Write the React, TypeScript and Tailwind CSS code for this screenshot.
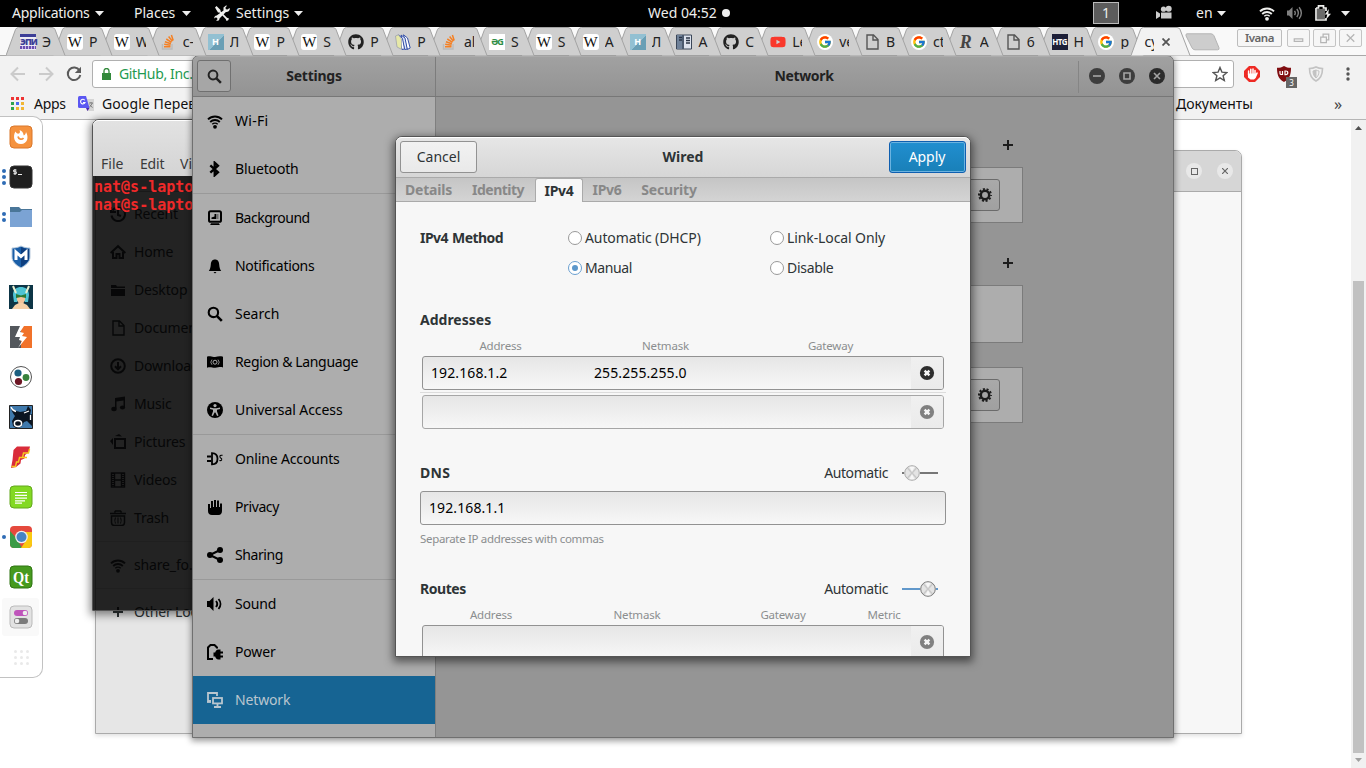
import React from "react";
import { FaGithub, FaYoutube } from "react-icons/fa";
import { FcGoogle } from "react-icons/fc";

type IconProps = { name: string; className?: string };

const glyphs: Record<string, React.ReactNode> = {
  wifi: (
    <g fill="none" stroke="currentColor" strokeWidth="2">
      <path d="M1 6.4a10 10 0 0 1 14 0" />
      <path d="M3.2 9a6.8 6.8 0 0 1 9.6 0" strokeWidth="1.8" />
      <path d="M5.3 11.3a3.8 3.8 0 0 1 5.4 0" strokeWidth="1.4" />
      <circle cx="8" cy="13.8" r="1.9" fill="currentColor" stroke="none" />
    </g>
  ),
  bluetooth: <path d="M3.300 4.300L11 11.300 7.700 14.300V1.700L11 4.700 3.300 11.700" fill="none" stroke="currentColor" strokeWidth="2.300" />,
  background: (
    <g>
      <rect x="2" y="1.2" width="12" height="10.6" rx="1.6" fill="none" stroke="currentColor" strokeWidth="2" />
      <path d="M4.5 8.5v-1l3-1V4h1.500v5h-4.500z" />
      <path d="M9 4h2.500v5h-2.500z" opacity=".35" />
      <path d="M4 13.200h8l.8 1.800h-9.600z" />
    </g>
  ),
  bell: <path d="M8 1.500c-3 0-4 2.300-4.200 5-.2 3-.8 4.800-2 6.500h12.400c-1.200-1.700-1.800-3.500-2-6.500-.2-2.700-1.200-5-4.200-5zM6.500 14h3l-1.500 1.400z" />,
  search: (
    <g fill="none" stroke="currentColor" strokeWidth="2.100">
      <circle cx="6.400" cy="6.400" r="4.700" />
      <path d="M9.800 9.800l5 5" strokeWidth="2.600" />
    </g>
  ),
  flag: (
    <g>
      <path d="M0 2.700c3-1.200 5 .8 8 .2s5-1 8-.2v10.800c-3-1-5 .3-8 .2s-5-1.200-8 0z" />
      <path d="M5 5.600a3.800 3.800 0 0 0 0 5.200M11 5.600a3.800 3.800 0 0 1 0 5.200" fill="none" stroke="#adadad" strokeWidth="0.800" />
      <circle cx="8" cy="8.200" r="2" fill="none" stroke="#adadad" strokeWidth="1" />
    </g>
  ),
  access: (
    <g>
      <circle cx="8" cy="8" r="8" />
      <circle cx="8" cy="3.600" r="1.600" fill="#adadad" />
      <path d="M3 5.600l3.500.6h3l3.500-.6v1.400l-3 .8v1.600l1.500 4-1.400.5-1.700-3.400h-.8l-1.700 3.400-1.400-.5 1.500-4v-1.600l-3-.8z" fill="#adadad" />
    </g>
  ),
  online: (
    <g fill="none" stroke="currentColor" strokeWidth="1.800">
      <path d="M0 5.500h4M0 10h4" />
      <path d="M5 2.200c4 0 5.500 2.500 5.500 5.600s-1.500 5.600-5.500 5.600z" />
      <path d="M15.500 4.400c-2-.6-3 .3-2.500 1.700s2.400 1 1.600 2.800c-.4.800-1.400.8-2.200.6" strokeWidth="1.100" />
    </g>
  ),
  hand: <path d="M1 5h2v4h1V2h2v6h1V1h2v7h1V1.500h2V8h1V4.500h2V12c0 2-1 4-3.500 4H5c-2.500 0-4-1.500-4-4z" />,
  share: (
    <g>
      <path d="M3 8l10-5M3 8l10 5" stroke="currentColor" strokeWidth="2" />
      <circle cx="3" cy="8" r="3" />
      <circle cx="13" cy="3" r="3" />
      <circle cx="13" cy="13" r="3" />
    </g>
  ),
  sound: (
    <g>
      <path d="M0 5h2.500l4-4v14l-4-4H0z" />
      <path d="M9 5c1.500 1.800 1.500 4.200 0 6M11.500 3c2.600 3 2.600 7 0 10" fill="none" stroke="currentColor" strokeWidth="1.900" />
    </g>
  ),
  loud: (
    <g>
      <path d="M0 5.500h2l3.500-3.500v12l-3.500-3.500H0z" />
      <path d="M7.500 5.800c1 1.400 1 3 0 4.400M9.800 4c2 2.600 2 5.400 0 8M12.100 2.300c3 3.800 3 7.600 0 11.400" fill="none" stroke="currentColor" strokeWidth="1.400" />
    </g>
  ),
  power: (
    <g>
      <path d="M6 15H1V3.500L3.500 1h4L10 3.500v1" fill="none" stroke="currentColor" strokeWidth="2" />
      <path d="M11.500 5.500h2v2H16v2h-2.500v2H16v2h-2.500v2h-2c-2 0-3-1.500-3.300-3H6.500v-4h1.700c.3-1.500 1.300-3 3.300-3z" />
    </g>
  ),
  network: (
    <g fill="none" stroke="currentColor" strokeWidth="1.800">
      <path d="M4 9H1V1h9v3" />
      <path d="M0 10h4" />
      <rect x="6" y="6" width="9" height="5.400" />
      <path d="M10.500 11v4M7 15h7" />
    </g>
  ),
  recent: (
    <g fill="none" stroke="currentColor" strokeWidth="2">
      <path d="M2.500 4.500a6.800 6.800 0 1 1-1 5" />
      <path d="M1 1v5h5" />
      <path d="M8 4v5l3 1" />
    </g>
  ),
  home: (
    <g fill="none" stroke="currentColor" strokeWidth="2">
      <path d="M.6 9L8 2.200 15.400 9" />
      <path d="M3 8v6h3.500v-4h3v4H13V8" />
    </g>
  ),
  folder: <path d="M1 3h5l1 1.500h8v1.500H1zM1 7h14v7H1z" />,
  doc: <path d="M3 1h6.500L14 5.500V15H3zM9 1v5h5" fill="none" stroke="currentColor" strokeWidth="1.400" />,
  download: (
    <g fill="none" stroke="currentColor" strokeWidth="2">
      <circle cx="8" cy="8" r="6.800" />
      <path d="M8 4v7M5 8.300l3 3 3-3" />
    </g>
  ),
  music: (
    <g>
      <path d="M5 2l10-1.500V11h-1.500V4.500L6.500 5.500v7H5z" />
      <ellipse cx="4" cy="13" rx="2.700" ry="2.200" />
      <ellipse cx="12.500" cy="11.500" rx="2.600" ry="2" />
    </g>
  ),
  pictures: (
    <g>
      <rect x="5" y="5" width="10" height="9" fill="none" stroke="currentColor" strokeWidth="2" />
      <path d="M0 7l3-3v7zM5 2l4-2 3 2.500z" />
    </g>
  ),
  video: (
    <g fill="none" stroke="currentColor">
      <rect x="1.500" y="1" width="13" height="14" strokeWidth="1.400" />
      <path d="M4.500 1v14M11.500 1v14M4.500 8h7" strokeWidth="1.400" />
      <path d="M3 1v14M13 1v14" strokeWidth="2" strokeDasharray="1 1" />
    </g>
  ),
  trash: (
    <g fill="none" stroke="currentColor" strokeWidth="1.500">
      <path d="M4.500 2.500l1-1.500h5l1 1.500M0 3.500h16" />
      <path d="M1.500 6h13v6.500c0 2-1 3-3 3h-7c-2 0-3-1-3-3z" />
      <path d="M5.500 7.500c-1 2-1 4 0 6M8 7.500v6M10.500 7.500c1 2 1 4 0 6" strokeWidth="1.100" />
    </g>
  ),
  plus: <path d="M7 3h2v4h4v2H9v4H7V9H3V7h4z" />,
  gear: (
    <g fill="none" stroke="currentColor">
      <circle cx="8" cy="8" r="4.200" strokeWidth="2.500" />
      <circle cx="8" cy="8" r="6" strokeWidth="2" strokeDasharray="2 1.770" strokeDashoffset="1" />
    </g>
  ),
  clear: (
    <g>
      <circle cx="8" cy="8" r="7.100" />
      <path d="M5.600 5.600l4.800 4.800M10.400 5.600l-4.800 4.800" stroke="#f5f5f5" strokeWidth="2.400" />
    </g>
  ),
  tools: (
    <g>
      <path d="M1 2.500L2.500 1l4 4v1.300l6.500 6.500 2 .7-.8 1.700-1.700.8-.8-2L5.500 7.500H4z" />
      <path d="M9.500 5.500V2.500L12 .5l1 .3-1.600 2 .5 1.400 1.600.4 2-1.600.4 1c-.5 2-2 3.300-4 3L5.500 13.500c0 1.600-1.200 2.500-2.600 2.300l-.8-.3 1.400-1.300-.5-1.400-1.400-.4L.3 13.500C0 12 1 10.500 2.700 10.500z" />
    </g>
  ),
  camera: (
    <g>
      <circle cx="7.500" cy="4.200" r="2.600" />
      <circle cx="12.700" cy="3.700" r="3" />
      <path d="M5 7.500h10.500v6H5zM0 6l4 2.500v3L0 14z" />
    </g>
  ),
  battery: (
    <g>
      <path d="M1 3h2.500V.8h5V3H11v3M11 13v2H1V3" fill="none" stroke="currentColor" strokeWidth="1.700" />
      <path d="M2 4h8v10H2z" opacity=".45" />
      <path d="M13.800 4l-4 5.500h2.500l-1.300 5L16 8.800h-2.700z" />
    </g>
  ),
};

const Icon = ({ name, className = "size-4" }: IconProps) => (
  <svg viewBox="0 0 16 16" className={`shrink-0 ${className}`} fill="currentColor">
    {glyphs[name]}
  </svg>
);

const Caret = () => (
  <svg viewBox="0 0 9 5" className="h-[5px] w-[9px]" fill="#eee">
    <path d="M0 0h9L4.500 5z" />
  </svg>
);

/* ---------- top panel ---------- */

const TopPanel = () => (
  <header className="relative z-50 flex h-[27px] items-center bg-black pb-px text-[14px] text-[#eeeeec]">
    <div className="flex w-[122px] items-center gap-[6px] pl-3 whitespace-nowrap">
      <span className="w-[77px] tracking-[-0.24px]">Applications</span>
      <Caret />
    </div>
    <div className="flex w-[92px] items-center gap-[6px] pl-3 whitespace-nowrap">
      <span className="w-[42px]">Places</span>
      <Caret />
    </div>
    <div className="flex flex-1 items-center whitespace-nowrap">
      <Icon name="tools" />
      <span className="ml-[6px] w-[58px]">Settings</span>
      <Caret />
    </div>
    <div className="flex w-[445px] items-center whitespace-nowrap">
      <span className="w-[74px]">Wed 04:52</span>
      <span className="size-2 rounded-full bg-[#eee]" />
    </div>
    <div className="flex w-[273px] items-center">
      <div className="flex h-[22px] w-[26px] items-center justify-center border border-[#bbb] bg-[#5c5c5c]">1</div>
      <Icon name="camera" className="ml-[37px] size-4 text-[#ccc]" />
      <span className="ml-[24px] w-[21px]">en</span>
      <Caret />
      <Icon name="wifi" className="ml-[33px] size-4" />
      <Icon name="loud" className="ml-3 size-4 text-[#808080]" />
      <Icon name="battery" className="ml-3 size-4" />
      <span className="w-[10px]" />
      <Caret />
    </div>
  </header>
);

/* ---------- browser ---------- */

const StackIcon = () => (
  <svg viewBox="0 0 16 16" className="size-4" fill="none">
    <path d="M1.500 10v5h9.500v-5" stroke="#bbb" strokeWidth="1.400" />
    <path d="M3 12.800h6.500M3.200 10.300l6.300.9M3.900 7.700l6 2M5.300 5l5.200 3.300M7.600 2.600l3.800 4.600M10.400 1l1.800 5.400" stroke="#f48024" strokeWidth="1.500" />
  </svg>
);

const Favicon = ({ kind }: { kind: string }) => {
  switch (kind) {
    case "w":
      return <span className="flex size-4 items-center justify-center rounded-[3px] bg-white font-['Liberation_Serif',serif] text-[15px] leading-4 text-[#111]">W</span>;
    case "so":
      return <StackIcon />;
    case "h":
      return (
        <span className="flex size-4 items-center justify-center bg-[linear-gradient(135deg,#92c0d2_55%,#6a9fb5_55%)] text-[9px] leading-4 font-bold text-white">H</span>
      );
    case "gh":
      return <FaGithub className="size-4 text-[#222]" />;
    case "yt":
      return <FaYoutube className="size-4 text-[#f9382b]" />;
    case "g":
      return (
        <span className="flex size-4 items-center justify-center rounded-full bg-white">
          <FcGoogle className="size-[14px]" />
        </span>
      );
    case "doc":
      return <Icon name="doc" className="size-4 text-[#555]" />;
    case "gg":
      return <span className="flex size-4 items-center justify-center bg-white text-[9px] font-bold tracking-[-1px] text-[#2f8d46]">ƏG</span>;
    case "epi":
      return (
        <span className="flex size-4 flex-col bg-[#ecebf3] text-center">
          <span className="h-[3px] bg-[#3d3f97]" />
          <span className="h-[9px] text-[9px] leading-[9px] font-black tracking-[-1px] text-[#3d3f97]">ЭПИ</span>
          <span className="h-[3px] bg-[repeating-linear-gradient(90deg,#6a4fb0_0_2px,#c9b8e8_2px_3px)]" />
        </span>
      );
    case "books":
      return (
        <svg viewBox="0 0 16 16" className="size-4" strokeLinejoin="round">
          <path d="M8.500.8l4 3.200 2.700 10-3 1.500z" fill="#fff" stroke="#3450a8" />
          <path d="M6 1l4 3 2.200 11-2.500.5z" fill="#dfe6f7" stroke="#3450a8" />
          <path d="M3.500 1l4 3.500L9.500 15l-2.500.5z" fill="#fff" stroke="#3450a8" />
          <path d="M.5 2L3.500.8 6.500 5v10.300L2 13z" fill="#e6e8a8" stroke="#8b91a8" strokeWidth=".6" />
        </svg>
      );
    case "book":
      return (
        <svg viewBox="0 0 16 16" className="size-4">
          <path d="M.5 1h15v14H.5z" fill="#dde3ee" stroke="#3a4658" />
          <path d="M1 1h7v14H1z" fill="#6f8199" />
          <path d="M3 3.500h3M3 6h3M10 4h4M10 6.500h4M10 9h4" stroke="#2a3446" strokeWidth="1.400" />
          <path d="M7 1v14" stroke="#2a3446" />
        </svg>
      );
    case "r":
      return <span className="flex size-4 items-center justify-center font-['Liberation_Serif',serif] text-[18px] leading-4 font-bold italic text-[#444]">R</span>;
    case "htg":
      return <span className="flex size-4 items-center justify-center bg-[#1d1f38] text-[8px] font-bold tracking-[-0.6px] text-white">HTG</span>;
    default:
      return null;
  }
};

const tabs: [string, string][] = [
  ["epi", "Э"], ["w", "Р"], ["w", "W"], ["so", "с-"], ["h", "Л"], ["w", "P"], ["w", "S"], ["gh", "P"], ["books", "P"],
  ["so", "al"], ["gg", "S"], ["w", "S"], ["w", "A"], ["h", "Л"], ["book", "A"], ["gh", "C"], ["yt", "Le"], ["g", "ve"],
  ["doc", "B"], ["g", "ct"], ["r", "A"], ["doc", "6"], ["htg", "H"], ["g", "p"],
];

const TabShape = ({ fill }: { fill: string }) => (
  <svg viewBox="0 0 60 29" className="absolute top-0 left-0 h-[29px] w-[60px]">
    <path d="M0 28.500L9.500 2.500Q10.500.5 12.500.5H46Q48 .5 49 2.500L59 28.500" fill={fill} stroke="#a3a3a3" />
  </svg>
);

const TabStrip = () => (
  <div className="flex h-[29px] border-b border-[#a8a8a8] bg-[#f9f9f9] pl-[6px]">
    {tabs.map(([icon, label], i) => (
      <div key={i} className="relative h-[29px] w-[46.900px] shrink-0" style={{ zIndex: 30 - i }}>
        <TabShape fill="#cfcfcf" />
        <div className="relative flex h-[29px] items-center gap-[6px] pl-[14px] text-[14px] text-[#222]">
          <span className="size-4 shrink-0">
            <Favicon kind={icon} />
          </span>
          <span className="w-[10px] shrink-0 overflow-hidden whitespace-nowrap">{label}</span>
        </div>
      </div>
    ))}
    <div className="relative z-40 h-[29px] w-[60px] shrink-0">
      <TabShape fill="#f2f2f2" />
      <div className="relative flex h-[29px] items-center pl-[13px] text-[14px] leading-[20px] text-[#222]">
        <span className="w-[10px] overflow-hidden whitespace-nowrap">су</span>
        <svg viewBox="0 0 8 8" className="ml-[8px] size-2" stroke="#555" strokeWidth="1.800">
          <path d="M.5.5l7 7M7.500.5l-7 7" />
        </svg>
      </div>
    </div>
    <svg viewBox="0 0 36 18" className="mt-[6px] -ml-[6px] h-[18px] w-[36px] shrink-0">
      <path d="M2 .8h24q2 0 3 2l5 12q.6 2-1.500 2H10q-2 0-3-2L1 2.800q-.5-2 1-2z" fill="#cdcdcd" stroke="#b4b4b4" />
    </svg>
    <div className="ml-auto flex gap-[3px] pt-[2px] pr-1">
      <div className="mr-[2px] flex h-[18px] w-[45px] items-center justify-center rounded-[2px] border border-[#bdbdbd] bg-[#f6f6f6] text-[11.500px] tracking-[-0.5px] font-semibold text-[#666]">Ivana</div>
      {["M6.500 12h9v-2.500h-9z", "M7 7.500h6v6h-6zM9.500 7.500v-3h6v6h-3", "M7 4.500l8 8M15 4.500l-8 8"].map((d) => (
        <div key={d} className="h-[18px] w-[23px] rounded-[2px] border border-[#c4c4c4] bg-[#f6f6f6]">
          <svg viewBox="0 0 22 17" className="h-4 w-[21px]" fill="none" stroke="#b5b5b5" strokeWidth="1.300">
            <path d={d} />
          </svg>
        </div>
      ))}
    </div>
  </div>
);

const Browser = () => (
  <div className="flex h-[741px] flex-col bg-white">
    <TabStrip />
    <div className="flex h-[36px] items-center bg-[#f2f2f2] pl-[10px]">
      <svg viewBox="0 0 16 16" className="size-4" fill="none" stroke="#cbcbcb" strokeWidth="2">
        <path d="M15 8H2M8 1.500L1.500 8 8 14.500" />
      </svg>
      <svg viewBox="0 0 16 16" className="ml-3 size-4" fill="none" stroke="#cbcbcb" strokeWidth="2">
        <path d="M1 8h13M8 1.500L14.500 8 8 14.500" />
      </svg>
      <svg viewBox="0 0 16 16" className="ml-3 size-4" fill="none" stroke="#5a5a5a" strokeWidth="2">
        <path d="M13.500 4.500A6.300 6.300 0 1 0 14.300 9" />
        <path d="M15 .8V7H8.800z" fill="#5a5a5a" stroke="none" />
      </svg>
      <div className="ml-[10px] flex h-[28px] w-[1142px] items-center rounded-[3px] border border-[#b0b0b0] bg-white pl-[9px] text-[14px] text-[#1f9a50]">
        <svg viewBox="0 0 9 12" className="h-3 w-[9px]" fill="#32893b">
          <path d="M0 5h9v7H0z" />
          <path d="M2 5V3a2.500 2.500 0 0 1 5 0v2" fill="none" stroke="#32893b" strokeWidth="1.300" />
        </svg>
        <span className="ml-[8px] tracking-[-0.35px] whitespace-nowrap">GitHub, Inc.</span>
        <svg viewBox="0 0 16 16" className="mr-[5px] ml-auto size-4" fill="none" stroke="#555" strokeWidth="1.400">
          <path d="M8 1.500l1.900 4.600 5 .4-3.800 3.200 1.200 4.800L8 11.900l-4.300 2.600 1.200-4.800L1.100 6.500l5-.4z" />
        </svg>
      </div>
      <svg viewBox="0 0 16 16" className="ml-[10px] size-4">
        <path d="M5 0h6l5 5v6l-5 5H5l-5-5V5z" fill="#ee2a24" />
        <path d="M4.600 9V5M6.800 8V3.200M9 8V3M11 8V4.500" stroke="#fff" strokeWidth="1.500" strokeLinecap="round" />
        <path d="M3.900 7.500h7.900l1-1.200 1.200.5-2.300 5.200L10 13.500H6.500L4 11.500z" fill="#fff" />
      </svg>
      <div className="relative ml-4 size-4">
        <svg viewBox="0 0 16 16" className="size-4">
          <path d="M8 0c2 1.300 4 1.800 7 1.800 0 6-1 11-7 14.200C2 12.800 1 7.800 1 1.800 4 1.800 6 1.300 8 0z" fill="#800d10" />
          <path d="M4 5v2.500q0 1 1.200 1h1.300V5M9 5h.8q2 0 2 1.800t-2 1.800H9z" fill="none" stroke="#fff" strokeWidth="1.200" />
        </svg>
        <span className="absolute top-[11px] left-[10px] flex h-[11px] w-[11px] items-center justify-center bg-[#666] text-[8px] text-white">3</span>
      </div>
      <svg viewBox="0 0 16 16" className="ml-4 size-4" fill="none" stroke="#c3c3c3">
        <path d="M8 1c2 1 4 1.500 6.500 1.500 0 6-1.500 10-6.500 12.500C3 12.500 1.500 8.500 1.500 2.500 4 2.500 6 2 8 1z" strokeWidth="1.600" />
        <path d="M8 4v8c-2-1.500-3-4-3-7z" fill="#c3c3c3" />
        <path d="M8 4c1 .5 2 .8 3 1 0 3-1 5.500-3 7" />
      </svg>
      <svg viewBox="0 0 4 14" className="ml-[22px] h-[14px] w-1" fill="#555">
        <circle cx="2" cy="2" r="1.700" /><circle cx="2" cy="7" r="1.700" /><circle cx="2" cy="12" r="1.700" />
      </svg>
    </div>
    <div className="flex h-[28px] items-center border-b border-[#b5b5b5] bg-[#f2f2f2] pb-1 pl-[11px] text-[14px] text-[#111]">
      <div className="grid grid-cols-3 gap-[2px]">
        {["bg-[#e33]", "bg-[#e33]", "bg-[#e33]", "bg-[#2fa44f]", "bg-[#4b6cf0]", "bg-[#f2b632]", "bg-[#2fa44f]", "bg-[#f2b632]", "bg-[#f2b632]"].map((c, i) => (
          <span key={i} className={`size-[3px] ${c}`} />
        ))}
      </div>
      <span className="ml-[10px] w-[44px] tracking-[-0.3px]">Apps</span>
      <svg viewBox="0 0 16 16" className="size-4">
        <path d="M7 3h9v12H9z" fill="#d5d5d5" />
        <path d="M0 1.500Q0 0 1.500 0H8l3.500 12H1.500Q0 12 0 10.500z" fill="#5b57f2" />
        <path d="M8 12h3.500L9.500 15z" fill="#4a1fa8" />
        <path d="M6.800 4.300A2.300 2.300 0 1 0 7 6.500H5" fill="none" stroke="#fff" strokeWidth="1.100" />
        <path d="M11 7h4M13 6v1M14.300 7q-1 3-3 4M11.700 8.500q1 2 3 3" fill="none" stroke="#777" strokeWidth=".9" />
      </svg>
      <span className="ml-2 tracking-[0.1px] whitespace-nowrap">Google Переводчик</span>
      <span className="ml-auto w-[158px] tracking-[-0.05px]">Документы</span>
      <span className="w-[32px] text-[16px] text-[#444]">»</span>
    </div>
    <div className="flex flex-1 justify-end">
      <div className="flex w-[15px] flex-col items-center bg-[#f1f1f1] px-[2px] py-[6px]">
        <svg viewBox="0 0 7 4" className="h-1 w-[7px]" fill="#505050"><path d="M3.500 0L7 4H0z" /></svg>
        <div className="mt-[151px] w-[11px] flex-1 bg-[#c1c1c1]" />
        <svg viewBox="0 0 7 4" className="mt-[5px] h-1 w-[7px]" fill="#a0a0a0"><path d="M0 0h7L3.500 4z" /></svg>
      </div>
    </div>
  </div>
);

/* ---------- file manager ---------- */

const places: [string, string][] = [
  ["recent", "Recent"], ["home", "Home"], ["folder", "Desktop"], ["doc", "Documents"], ["download", "Downloads"],
  ["music", "Music"], ["pictures", "Pictures"], ["video", "Videos"], ["trash", "Trash"],
];

const Place = ({ icon, label }: { icon: string; label: string }) => (
  <div className="flex h-[38px] items-center gap-2 pl-[14px] tracking-[-0.15px] whitespace-nowrap">
    <Icon name={icon} />
    <span>{label}</span>
  </div>
);

const Files = () => (
  <section className="absolute top-[150px] left-[95px] flex h-[584px] w-[1147px] flex-col rounded-t-[7px] border border-[#aaa] bg-[#f7f7f7] text-[14px] text-[#2e3436] shadow-[0_2px_4px_rgba(0,0,0,0.12)]">
    <div className="flex h-[41px] shrink-0 items-center justify-end gap-[15px] rounded-t-[6px] border-b border-[#aaa] bg-[#d6d6d6] pr-2 text-[#666]">
      <span className="flex size-4 items-center justify-center rounded-full bg-[#e8e8e8]">
        <span className="size-[7px] border border-[#666]" />
      </span>
      <span className="flex size-4 items-center justify-center rounded-full bg-[#e8e8e8]">
        <svg viewBox="0 0 6 6" className="size-[6px]" stroke="#666" strokeWidth="1.200"><path d="M0 0l6 6M6 0L0 6" /></svg>
      </span>
    </div>
    <div className="w-[200px] flex-1 bg-[#e6e6e6] pt-[3px]">
      {places.map(([icon, label]) => (
        <Place key={label} icon={icon} label={label} />
      ))}
      <div className="mt-[4px] border-t border-[#d0d0d0] pt-[4px] pb-[4px]">
        <Place icon="wifi" label="share_fo…" />
      </div>
      <div className="border-t border-[#d0d0d0] pt-[4px]">
        <Place icon="plus" label="Other Locations" />
      </div>
    </div>
  </section>
);

const Terminal = () => (
  <section className="absolute top-[119px] left-[92px] flex h-[492px] w-[400px] flex-col rounded-t-[7px] border border-[#555] shadow-[0_2px_8px_2px_rgba(0,0,0,0.45)]">
    <div className="flex h-[56px] shrink-0 items-end rounded-t-[6px] border-t border-white bg-linear-to-b from-[#e2e2e2] to-[#d4d4d4] pb-[5px] pl-2 text-[14px] text-[#3a3a3a]">
      <span className="w-[39px]">File</span>
      <span className="w-[40px] tracking-[-0.2px]">Edit</span>
      <span>View</span>
    </div>
    <div className="flex-1 bg-[rgba(0,0,0,0.85)] pt-[2px] pl-[1px] font-['DejaVu_Sans_Mono',monospace] text-[15px] leading-[18px] font-bold whitespace-nowrap text-[#ef2929]">
      <div>nat@s-laptop:~$</div>
      <div>nat@s-laptop:~$</div>
    </div>
  </section>
);

/* ---------- dock ---------- */

const dockIcons: { dots: number; art: React.ReactNode; active?: boolean }[] = [
  { dots: 0, art: <g><rect x="1" y="1" width="22" height="22" rx="4" fill="#f5923e" stroke="#d9772b" /><path d="M6.500 6.500C3.500 11 5 19 12 19c6.500 0 8-7 5-12-.2 2-1 3-2.300 3.500C14.500 7.500 12.500 5.500 10.500 5c.8 1.500.5 3-.5 3.500-1.500.5-3-.5-3.500-2z" fill="#fff" /><path d="M9 11.500c.5 3 4 3.500 5.500 1.500" fill="none" stroke="#f5923e" strokeWidth="1.700" /></g> },
  { dots: 3, art: <g><rect x="1" y="1" width="22" height="22" rx="4" fill="#1f1f1f" stroke="#333" /><path d="M7.500 5H4.700v1.800h2.600v1.900H4.500M6 4v6M9 9.500h4" fill="none" stroke="#eee" strokeWidth="1" /></g> },
  { dots: 2, art: <g><path d="M1 2h9l2 2h11v6H1z" fill="#4a7699" /><path d="M1 7h10l2-2h10v17H1z" fill="#7ba3d4" /></g> },
  { dots: 0, art: <g><path d="M12 1c3 1.500 6 2 9 2v9c0 5-4 8-9 11-5-3-9-6-9-11V3c3 0 6-.5 9-2z" fill="#1a5fa8" stroke="#bcd" /><path d="M12 2c3 1.500 5 2 8 2v8c0 5-4 7-8 10z" fill="#0e3f80" /><path d="M7 15V7l5 4.500L17 7v8" fill="none" stroke="#fff" strokeWidth="3" /></g> },
  { dots: 0, art: <g><path d="M0 0h24v24H0z" fill="#0d3546" /><path d="M4 10c0-6 4-8 8-8s8 2 8 8l-1 7h-3l-4-6-4 6H5z" fill="#4fc4d4" /><path d="M4 1l3 7M20 1l-3 7" stroke="#e8f0d0" strokeWidth="2" /><path d="M8 11h8v4l-2 4h-4l-2-4z" fill="#f3c49b" /><path d="M7 9l5 1.500L17 9v4l-5-1-5 1z" fill="#2b7a35" /><path d="M3 24l3-4 4-2h4l4 2 3 4z" fill="#f5cfa6" /></g> },
  { dots: 0, art: <g><path d="M1 1h11v22H1z" fill="#53575c" /><path d="M12 1h11v22H12z" fill="#f1722a" /><path d="M11 1L6 12h5l-1 3 3 1-4 7 9-11-5-1 2-3-4-1 4-6z" fill="#fff" /></g> },
  { dots: 0, art: <g><circle cx="12" cy="12" r="10.500" fill="#fff" stroke="#555" /><circle cx="9" cy="8" r="3.600" fill="#1b5f80" /><circle cx="17" cy="12.500" r="3.400" fill="#37813c" /><circle cx="9.500" cy="16.500" r="3.600" fill="#6d1624" /></g> },
  { dots: 0, art: <g><path d="M.5.500h23v23H.5z" fill="#3f79ac" stroke="#222" /><path d="M2 1c1 4 5 5 9 6l6-1 2-5 3 4-1 5 2-1v12l-5-5-3 1-3 5-5 1-3-2-1-5 3-5C4 8 2 6 2 1z" fill="#0b1522" /><ellipse cx="9" cy="18.500" rx="3.600" ry="3" fill="none" stroke="#fff" strokeWidth="1.500" /><path d="M15 8l5-2M2 2c1 3 3 4 5 4.500M21.500 10v5" stroke="#fff" strokeWidth="1.300" fill="none" /></g> },
  { dots: 0, art: <g><path d="M8 1.500h13l-1.500 6L16 10l-.5 3.500L12 15l-.5 3.500L7 22l-5 1 1.500-8L4.500 5z" fill="#d92c3a" /><path d="M20.500 4l-1 4h-5l-1 4.500H18M13.500 12.500h-3l-1 4.500H7.500l-1 4.500H2.500" fill="none" stroke="#f7c81e" strokeWidth="1.400" /></g> },
  { dots: 0, art: <g><rect x="1" y="1" width="22" height="22" rx="4" fill="#83d923" stroke="#62a81c" /><path d="M6 7.500h12M6 10.300h12M6 13.100h12M6 15.900h10M6 18.200h7" stroke="#fff" strokeWidth="1.200" /></g> },
  { dots: 1, art: <g><rect x="1" y="1" width="22" height="22" rx="4" fill="#e5493d" /><path d="M1 6l7 8 5 9H5q-4 0-4-4z" fill="#3b9b46" /><path d="M14 7h9v12q0 4-4 4h-7l6-9z" fill="#fac911" /><circle cx="12.500" cy="12" r="6.300" fill="#eee" /><circle cx="12.500" cy="12" r="5" fill="#4583c4" /></g> },
  { dots: 0, art: <g><rect x="1" y="1" width="22" height="22" rx="4" fill="#469a1f" stroke="#2f7512" /><text x="12" y="17.500" textAnchor="middle" fontFamily="Liberation Serif" fontWeight="bold" fontSize="16" textLength="16" lengthAdjust="spacingAndGlyphs" fill="#fff">Qt</text></g> },
  { dots: 1, active: true, art: <g><rect x="1" y="1" width="22" height="22" rx="4" fill="#e2e2e2" stroke="#bbb" /><rect x="5" y="5" width="14" height="6" rx="3" fill="#bf54bb" /><circle cx="16" cy="8" r="2.300" fill="#eee" /><rect x="5" y="13" width="14" height="6" rx="3" fill="#7b7b7b" /><circle cx="8" cy="16" r="2.300" fill="#eee" /></g> },
];

const Dock = () => (
  <nav className="absolute top-[116px] left-0 h-[562px] w-[43px] rounded-r-[10px] border border-l-0 border-[#c2c2c2] bg-white">
    {dockIcons.map((d, i) => (
      <div key={i} className="flex h-10 items-center">
        <div className="flex w-[6px] flex-col items-end gap-[2px]">
          {Array.from({ length: d.dots }, (_, k) => (
            <span key={k} className="size-[4px] rounded-full bg-[#2f6cb5]" />
          ))}
        </div>
        <div className={`-ml-[4px] flex h-[38px] w-[37px] items-center justify-center rounded-[3px] ${d.active ? "bg-[#f9f9f9]" : ""}`}>
          <svg viewBox="0 0 24 24" className="size-6">{d.art}</svg>
        </div>
      </div>
    ))}
    <div className="grid h-10 grid-cols-[3px_3px_3px] place-content-center gap-[3px]">
      {Array.from({ length: 9 }, (_, k) => (
        <span key={k} className="size-[3px] rounded-full bg-[#e9e9e9]" />
      ))}
    </div>
  </nav>
);

/* ---------- settings ---------- */

const groups: [string, string, string][][] = [
  [["wifi", "Wi-Fi", "tracking-[0.3px]"], ["bluetooth", "Bluetooth", "tracking-[-0.15px]"]],
  [
    ["background", "Background", "tracking-[-0.5px]"],
    ["bell", "Notifications", "tracking-[-0.3px]"],
    ["search", "Search", ""],
    ["flag", "Region & Language", "tracking-[-0.35px]"],
    ["access", "Universal Access", "tracking-[-0.08px]"],
  ],
  [["online", "Online Accounts", "tracking-[-0.15px]"], ["hand", "Privacy", "tracking-[-0.4px]"], ["share", "Sharing", "tracking-[-0.4px]"]],
  [["sound", "Sound", "tracking-[-0.2px]"], ["power", "Power", "tracking-[-0.15px]"], ["network", "Network", "tracking-[-0.15px]"]],
];

const GearRow = ({ gear, className }: { gear?: boolean; className: string }) => (
  <div className={`flex items-center justify-end border border-[#7b7b7b] bg-[#adadad] pr-[22px] ${className}`}>
    {gear && (
      <div className="flex h-8 w-[34px] items-center justify-center rounded-[3px] border border-[#6b6b6b] bg-linear-to-b from-[#a9a9a9] to-[#a0a0a0] pl-[3px] text-[#1d1d1d]">
        <Icon name="gear" />
      </div>
    )}
  </div>
);

const winButtons = [
  ["bg-[#3d3d3d]", "M4 8h8"],
  ["bg-[#3d3d3d]", "M5 5h6v6H5z"],
  ["bg-[#2b2b2b]", "M5 5l6 6M11 5l-6 6"],
];

const Settings = () => (
  <section className="absolute top-[55px] left-[192px] flex h-[683px] w-[982px] flex-col overflow-visible rounded-t-[7px] border border-[#707070] bg-[#959595] shadow-[0_2px_6px_1px_rgba(0,0,0,0.4)]">
    <div className="flex h-[41px] shrink-0 rounded-t-[6px] border-t border-b border-t-[#ababab] border-b-[#777] bg-linear-to-b from-[#a1a1a1] to-[#939393] text-[14px] font-bold text-[#222]">
      <div className="flex w-[243px] items-center border-r border-[#7c7c7c] pl-1">
        <div className="-mt-px flex h-8 w-[34px] items-center justify-center rounded-[3px] border border-[#707070] bg-[#a6a6a6]">
          <Icon name="search" className="size-[15px]" />
        </div>
        <span className="w-[166px] pb-[2px] text-center tracking-[-0.25px]">Settings</span>
      </div>
      <div className="flex flex-1 items-center">
        <span className="w-[642px] pb-[2px] pl-[94px] text-center tracking-[-0.35px]">Network</span>
        <div className="flex h-8 items-center gap-[14px] border-l border-[#858585] pb-px pl-[10px]">
          {winButtons.map(([bg, d]) => (
            <span key={d} className={`size-4 rounded-full ${bg}`}>
              <svg viewBox="0 0 16 16" className="size-4" fill="none" stroke="#a5a5a5" strokeWidth="1.600"><path d={d} /></svg>
            </span>
          ))}
        </div>
      </div>
    </div>
    <div className="flex flex-1">
      <aside className="w-[243px] border-r border-[#7f7f7f] bg-[#adadad] text-[14px] text-black">
        {groups.map((group, gi) => (
          <div key={gi} className={gi > 0 ? "border-t border-[#999]" : ""}>
            {group.map(([icon, label, tracking]) => (
              <div key={label} className={`flex h-12 items-center gap-3 pl-[14px] ${label === "Network" ? "bg-[#166493] text-[#b9c6cf]" : ""}`}>
                <Icon name={icon} />
                <span className={tracking}>{label}</span>
              </div>
            ))}
          </div>
        ))}
      </aside>
      <div className="flex-1 pl-[151px] text-[#1d1d1d]">
        <div className="w-[436px]">
          <div className="flex h-[70px] items-end justify-end pr-[7px] pb-[14px]"><Icon name="plus" /></div>
          <GearRow gear className="h-[56px]" />
          <div className="flex h-[62px] items-end justify-end pr-[7px] pb-[14px]"><Icon name="plus" /></div>
          <GearRow className="h-[58px]" />
          <GearRow gear className="mt-6 h-[56px]" />
        </div>
      </div>
    </div>
  </section>
);

/* ---------- dialog ---------- */

const Radio = ({ label, checked, tracking }: { label: string; checked?: boolean; tracking: string }) => (
  <label className="flex w-[202px] items-center gap-[3px] whitespace-nowrap">
    <span className={`flex size-[14px] items-center justify-center rounded-full border bg-white ${checked ? "border-[#6a9fd0]" : "border-[#999]"}`}>
      {checked && <span className="size-[6px] rounded-full bg-[#5b97cb]" />}
    </span>
    <span className={tracking}>{label}</span>
  </label>
);

const Entry = ({ values, dim, wide }: { values: string[]; dim?: boolean; wide?: boolean }) => (
  <div className={`ml-[2px] flex h-[34px] w-[522px] overflow-hidden rounded-[3px] border bg-linear-to-b from-[#e6e6e6] to-[#f7f7f7] tracking-[0.1px] text-black ${dim && !wide ? "border-[#a6a6a6]" : "border-[#929292]"}`}>
    {values.map((v, i) => (
      <span key={i} className="flex w-[163px] shrink-0 items-center pl-2">{v}</span>
    ))}
    <span className={`-ml-px flex flex-1 items-center justify-center bg-linear-to-b from-[#f0f0f0] to-[#ebebeb] pr-px ${dim ? "text-[#808080]" : "text-[#2e2e2e]"}`}>
      <Icon name="clear" />
    </span>
  </div>
);

const Switch = ({ on }: { on?: boolean }) => (
  <span className="flex w-[36px] items-center">
    <span className={`h-[2px] ${on ? "w-[18px] bg-[#6198cb]" : "w-[2px] bg-[#777]"}`} />
    <svg viewBox="0 0 16 16" className="size-4 shrink-0">
      <circle cx="8" cy="8" r="7.300" fill="#e4e4e4" stroke={on ? "#777" : "#aaa"} />
      <path d="M8 8L3.500 3M8 8l4.500-5M8 8l-4.500 5M8 8l4.500 5" stroke="#c9c9c9" strokeWidth="1.500" />
      <path d="M8 7L5.500 1.800h5zM8 9l-2.500 5.200h5z" fill="#f7f7f7" />
    </svg>
    <span className={`h-[2px] flex-1 ${on ? "bg-[#6198cb]" : "bg-[#777]"}`} />
  </span>
);

const SectionTitle = ({ title, on, className }: { title: string; on?: boolean; className: string }) => (
  <div className={`flex h-6 w-[518px] items-center justify-between ${className}`}>
    <b className={title === "Routes" ? "tracking-[-0.45px]" : "tracking-[0.3px]"}>{title}</b>
    <span className="flex items-center gap-[14px]">
      <span className="tracking-[-0.4px]">Automatic</span>
      <Switch on={on} />
    </span>
  </div>
);

const dialogTabs: [string, string][] = [
  ["Details", "w-[67px] pl-[3px] tracking-[-0.2px]"],
  ["Identity", "w-[66px] pl-[3px] tracking-[-0.5px]"],
  ["IPv4", ""],
  ["IPv6", "w-[48px] justify-center tracking-[-0.3px]"],
  ["Security", "w-[76px] justify-center tracking-[-0.15px]"],
];

const Dialog = () => (
  <section className="absolute top-[136px] left-[395px] flex h-[521px] w-[576px] flex-col rounded-t-[7px] border border-[#555] bg-[#f7f7f7] text-[14px] text-[#2e3436] shadow-[0_3px_9px_2px_rgba(0,0,0,0.5)]">
    <div className="flex h-[41px] shrink-0 items-center justify-between rounded-t-[6px] border-t border-b border-t-white border-b-[#aaa] bg-linear-to-b from-[#e6e6e6] to-[#d6d6d6] pr-1 pb-px pl-[4px]">
      <span className="flex h-8 w-[77px] items-center justify-center rounded-[3px] border border-[#929292] bg-linear-to-b from-[#f2f2f2] to-[#e9e9e9]">Cancel</span>
      <b>Wired</b>
      <span className="flex h-8 w-[77px] items-center justify-center rounded-[3px] border border-[#0f5fb0] bg-linear-to-b from-[#218fd0] to-[#1980b8] pr-px tracking-[-0.1px] text-white shadow-[inset_0_0_0_1px_#6bb3e0]">Apply</span>
    </div>
    <div className="flex h-6 shrink-0 border-b border-[#aaa] bg-linear-to-b from-[#c5c5c5] to-[#d4d4d4] pl-[6px] font-bold text-[#888]">
      {dialogTabs.map(([t, cls]) =>
        t === "IPv4" ? (
          <span key={t} className="-mb-px flex h-6 w-[48px] items-center justify-center rounded-t-[3px] border border-b-0 border-[#aaa] bg-[#f7f7f7] tracking-[-0.3px] text-[#2e3436]">{t}</span>
        ) : (
          <span key={t} className={`flex items-center ${cls}`}>{t}</span>
        )
      )}
    </div>
    <div className="flex-1 overflow-hidden pt-[21px] pl-6">
      <div className="flex h-[60px]">
        <b className="flex h-[30px] w-[148px] shrink-0 items-center tracking-[-0.55px] [word-spacing:1px]">IPv4 Method</b>
        <div className="grid shrink-0 grid-cols-[202px_200px] grid-rows-[30px_30px]">
          <Radio label="Automatic (DHCP)" tracking="tracking-[-0.1px]" />
          <Radio label="Link-Local Only" tracking="tracking-[-0.1px]" />
          <Radio label="Manual" tracking="tracking-[-0.4px]" checked />
          <Radio label="Disable" tracking="tracking-[-0.3px]" />
        </div>
      </div>
      <div className="mt-[25px] flex h-6 items-center"><b>Addresses</b></div>
      <div className="mt-1 -ml-[2px] flex h-5 items-center text-[11.500px] text-[#8b8e8f]">
        {["Address", "Netmask", "Gateway"].map((h) => (
          <span key={h} className="w-[165px] text-center tracking-[-0.2px]">{h}</span>
        ))}
      </div>
      <Entry values={["192.168.1.2", "255.255.255.0", ""]} />
      <div className="mt-[2px] mb-[2px] h-px w-[526px] bg-[#dcdcdc]" />
      <Entry values={["", "", ""]} dim />
      <SectionTitle title="DNS" className="mt-8" />
      <div className="mt-[6px] flex h-[34px] w-[526px] items-center rounded-[3px] border border-[#929292] bg-linear-to-b from-[#e6e6e6] to-[#f7f7f7] pl-2 tracking-[0.1px] text-black">192.168.1.1</div>
      <div className="mt-1 flex h-5 items-center text-[11.500px] tracking-[-0.33px] text-[#8b8e8f]">Separate IP addresses with commas</div>
      <SectionTitle title="Routes" on className="mt-7" />
      <div className="mt-1 -ml-[2px] flex h-5 items-center text-[11.500px] text-[#8b8e8f]">
        {["Address", "Netmask", "Gateway"].map((h) => (
          <span key={h} className="w-[146px] text-center tracking-[-0.2px]">{h}</span>
        ))}
        <span className="w-[56px] text-center tracking-[-0.2px]">Metric</span>
      </div>
      <Entry values={["", "", ""]} dim wide />
    </div>
  </section>
);

export default function App() {
  return (
    <main className="relative h-[768px] w-[1366px] overflow-hidden bg-white font-['Noto_Sans',sans-serif] leading-none">
      <TopPanel />
      <Browser />
      <Files />
      <Dock />
      <Terminal />
      <Settings />
      <Dialog />
    </main>
  );
}
